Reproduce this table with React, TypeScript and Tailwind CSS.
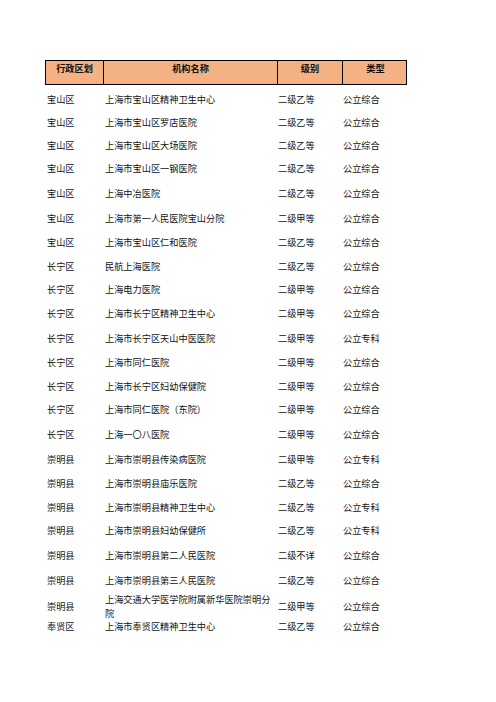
import React from "react";

type Row = { d: string; n: React.ReactNode; l: string; t: string; h: string };

const rows: Row[] = [
  { d: "宝山区", n: "上海市宝山区精神卫生中心", l: "二级乙等", t: "公立综合", h: "h-[22px]" },
  { d: "宝山区", n: "上海市宝山区罗店医院", l: "二级乙等", t: "公立综合", h: "h-[23px]" },
  { d: "宝山区", n: "上海市宝山区大场医院", l: "二级乙等", t: "公立综合", h: "h-[23px]" },
  { d: "宝山区", n: "上海市宝山区一钢医院", l: "二级乙等", t: "公立综合", h: "h-[24px]" },
  { d: "宝山区", n: "上海中冶医院", l: "二级乙等", t: "公立综合", h: "h-[25px]" },
  { d: "宝山区", n: "上海市第一人民医院宝山分院", l: "二级甲等", t: "公立综合", h: "h-[25px]" },
  { d: "宝山区", n: "上海市宝山区仁和医院", l: "二级乙等", t: "公立综合", h: "h-[24px]" },
  { d: "长宁区", n: "民航上海医院", l: "二级乙等", t: "公立综合", h: "h-[23px]" },
  { d: "长宁区", n: "上海电力医院", l: "二级甲等", t: "公立综合", h: "h-[24px]" },
  { d: "长宁区", n: "上海市长宁区精神卫生中心", l: "二级甲等", t: "公立综合", h: "h-[24px]" },
  { d: "长宁区", n: "上海市长宁区天山中医医院", l: "二级甲等", t: "公立专科", h: "h-[25px]" },
  { d: "长宁区", n: "上海市同仁医院", l: "二级甲等", t: "公立综合", h: "h-[24px]" },
  { d: "长宁区", n: "上海市长宁区妇幼保健院", l: "二级甲等", t: "公立综合", h: "h-[23px]" },
  { d: "长宁区", n: "上海市同仁医院（东院）", l: "二级甲等", t: "公立综合", h: "h-[24px]" },
  { d: "长宁区", n: "上海一〇八医院", l: "二级甲等", t: "公立综合", h: "h-[25px]" },
  { d: "崇明县", n: "上海市崇明县传染病医院", l: "二级甲等", t: "公立专科", h: "h-[25px]" },
  { d: "崇明县", n: "上海市崇明县庙乐医院", l: "二级乙等", t: "公立综合", h: "h-[24px]" },
  { d: "崇明县", n: "上海市崇明县精神卫生中心", l: "二级乙等", t: "公立专科", h: "h-[23px]" },
  { d: "崇明县", n: "上海市崇明县妇幼保健所", l: "二级乙等", t: "公立专科", h: "h-[24px]" },
  { d: "崇明县", n: "上海市崇明县第二人民医院", l: "二级不详", t: "公立综合", h: "h-[25px]" },
  { d: "崇明县", n: "上海市崇明县第三人民医院", l: "二级乙等", t: "公立综合", h: "h-[25px]" },
  {
    d: "崇明县",
    n: (
      <>
        上海交通大学医学院附属新华医院崇明分
        <br />
        院
      </>
    ),
    l: "二级甲等",
    t: "公立综合",
    h: "h-[23px]",
  },
  { d: "奉贤区", n: "上海市奉贤区精神卫生中心", l: "二级乙等", t: "公立综合", h: "h-[22px]" },
];

export default function App() {
  return (
    <div
      className="min-h-[702px] w-[496px] bg-white pl-[45px] pt-[60px] text-[9.2px] text-[#111]"
      style={{ fontFamily: '"Noto Sans CJK SC", "Noto Sans", sans-serif' }}
    >
      <div className="grid h-[25px] w-[362px] grid-cols-[58px_174px_65px_65px] border border-black bg-[#f4b183] font-bold leading-[12px]">
        <div className="border-r border-black pt-[1px] text-center">行政区划</div>
        <div className="border-r border-black pt-[1px] text-center">机构名称</div>
        <div className="border-r border-black pt-[1px] text-center">级别</div>
        <div className="pt-[1px] text-center">类型</div>
      </div>
      <div className="mt-[3px] flex w-[362px] flex-col">
        {rows.map((r, i) => (
          <div key={i} className={`grid grid-cols-[58px_174px_65px_65px] items-center leading-[14px] ${r.h}`}>
            <div className="pl-[2px]">{r.d}</div>
            <div className="pl-[2px]">{r.n}</div>
            <div className="pl-[1px]">{r.l}</div>
            <div className="pl-[1px]">{r.t}</div>
          </div>
        ))}
      </div>
    </div>
  );
}
